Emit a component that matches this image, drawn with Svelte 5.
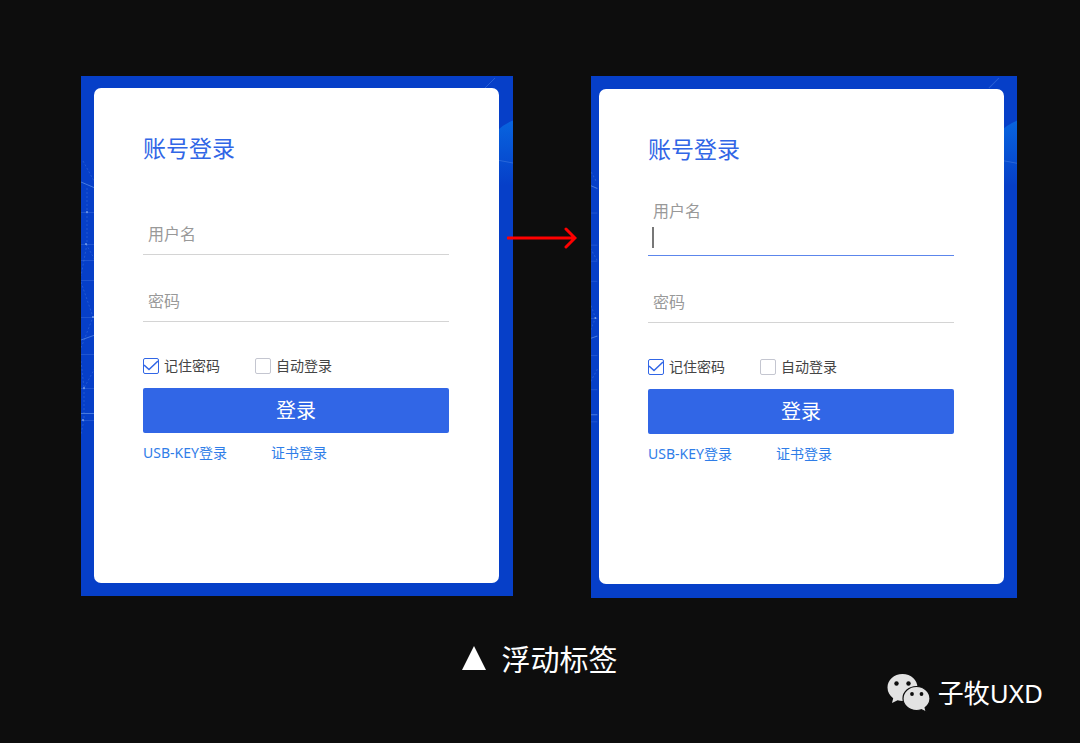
<script lang="ts">
	const panels = [
		{ id: 'rest', focused: false },
		{ id: 'focus', focused: true }
	];

	const gridLines = [136, 168, 184, 204, 241, 278, 312, 344];
	const nodes = [
		[6, 136],
		[5, 168],
		[12, 241],
		[3, 312],
		[2, 344]
	];
</script>

<main class="page">
	<div class="stage">
		{#each panels as panel, i}
			{#if i > 0}
				<div class="arrow">
					<svg width="70" height="22" viewBox="0 0 70 22" fill="none" aria-hidden="true">
						<path d="M1 11h66M59 2l9 9-9 9" stroke="#f00" stroke-width="3" stroke-linecap="round" />
					</svg>
				</div>
			{/if}
			<section class="frame" class:frame-focus={panel.focused}>
				<svg class="scene" viewBox="0 0 432 520" preserveAspectRatio="xMaxYMin slice" aria-hidden="true">
					<defs>
						<linearGradient id="glow-{panel.id}" x1="0" y1="0" x2="0" y2="1">
							<stop offset="0" stop-color="#0866e0" />
							<stop offset="0.7" stop-color="#063fc8" />
						</linearGradient>
					</defs>
					<circle cx="450" cy="90" r="49" fill="url(#glow-{panel.id})" />
					<path d="M404 12l10-10M416 84l16 3" stroke="#4a80e4" stroke-opacity="0.5" />
					{#each gridLines as y}
						<path d="M0 {y}.5h14" stroke="#5a88e8" stroke-opacity="0.3" />
					{/each}
					<path d="M0 106l14 6M0 264l14-5M0 337.5h14" stroke="#6fa0f0" stroke-opacity="0.6" />
					<path
						d="M2 85l11 20M6 112v56L0 200M0 206l12 35L0 272M5 168l9 16M0 285l3 27 11-20M3 312v32l-3 14"
						stroke="#4a80e4"
						stroke-opacity="0.4"
						stroke-dasharray="2 2"
						fill="none"
					/>
					{#each nodes as [x, y]}
						<circle cx={x} cy={y} r="1" fill="#9cbcf5" fill-opacity="0.7" />
					{/each}
				</svg>

				<form class="card" onsubmit={(e) => e.preventDefault()}>
					<h2 class="title">账号登录</h2>

					<div class="field" class:active={panel.focused}>
						<input id="user-{panel.id}" type="text" autocomplete="off" />
						<label for="user-{panel.id}">用户名</label>
						{#if panel.focused}
							<span class="caret"></span>
						{/if}
					</div>
					<div class="field">
						<input id="pass-{panel.id}" type="password" autocomplete="off" />
						<label for="pass-{panel.id}">密码</label>
					</div>

					<div class="options">
						<label class="check"><input type="checkbox" checked />记住密码</label>
						<label class="check"><input type="checkbox" />自动登录</label>
					</div>

					<button class="submit" type="submit">登录</button>

					<div class="links">
						<a href="#usb-key">USB-KEY登录</a>
						<a href="#cert">证书登录</a>
					</div>
				</form>
			</section>
		{/each}
	</div>

	<div class="caption">
		<svg width="24" height="28" viewBox="0 0 24 28" aria-hidden="true">
			<path d="M12 0l12 24H0z" fill="#fff" />
		</svg>
		<span>浮动标签</span>
	</div>

	<footer class="credit">
		<svg width="44" height="38" viewBox="0 0 44 38" aria-hidden="true">
			<path
				d="M15.500 0C7 0 .5 6 .5 13.500c0 4.500 2.200 8.200 5.700 10.700L5 29l5.600-2.700c1.600.5 3.200.7 4.900.7 8.500 0 15-6 15-13.500S24 0 15.500 0z"
				fill="#e2e2e2"
			/>
			<path
				d="M29.500 12.500c-7.500 0-13.500 5.300-13.500 12s6 12 13.500 12c1.700 0 3.300-.3 4.800-.8l5 2.300-1.200-4.300c3-2.200 4.900-5.500 4.900-9.200 0-6.700-6-12-13.500-12z"
				fill="#e2e2e2"
				stroke="#0d0d0d"
				stroke-width="1.200"
			/>
			<g fill="#0d0d0d">
				<circle cx="9.500" cy="9.500" r="2.200" />
				<circle cx="21.500" cy="9.500" r="2.200" />
				<circle cx="25" cy="20" r="1.900" />
				<circle cx="34.500" cy="20" r="1.900" />
			</g>
		</svg>
		<span>子牧UXD</span>
	</footer>
</main>

<style>
	:global(body) {
		margin: 0;
		background: #0d0d0d;
	}

	.page {
		box-sizing: border-box;
		min-height: 100vh;
		padding-top: 76px;
		background: #0d0d0d;
		color: #fff;
		font-family: 'Noto Sans', 'Noto Sans CJK SC', sans-serif;
	}

	.stage {
		display: grid;
		grid-template-columns: minmax(0, 432fr) minmax(0, 78fr) minmax(0, 426fr);
		align-items: start;
		padding: 0 63px 0 81px;
	}

	.frame {
		position: relative;
		display: flex;
		padding: 12px 14px 13px 13px;
		background: #063fc8;
	}

	.frame-focus {
		padding: 13px 13px 14px 8px;
	}

	.scene {
		position: absolute;
		inset: 0;
		width: 100%;
		height: 100%;
	}

	/* the tail of the arrow runs over the edge of the first frame */
	.arrow {
		position: relative;
		z-index: 1;
		display: flex;
		justify-content: flex-end;
		padding: 151px 14px 0 0;
	}

	.arrow svg {
		flex: none;
	}

	.card {
		position: relative;
		box-sizing: border-box;
		flex: 1;
		padding: 44px 50px 120px 49px;
		border-radius: 7px;
		background: #fff;
	}

	.title {
		margin: 0 0 34px;
		color: #3166e6;
		font-size: 23px;
		font-weight: 400;
		line-height: 32px;
	}

	.field {
		position: relative;
		margin-bottom: 10px;
		padding-top: 24px;
		border-bottom: 1px solid #d4d4d4;
	}

	.field input {
		display: block;
		box-sizing: border-box;
		width: 100%;
		height: 32px;
		padding: 0 5px;
		border: 0;
		outline: 0;
		background: transparent;
		color: #333;
		font: inherit;
		font-size: 16px;
	}

	.field label {
		position: absolute;
		left: 5px;
		bottom: 8px;
		color: #999;
		font-size: 16px;
		line-height: 24px;
	}

	.field.active {
		border-bottom-color: #5c86ec;
	}

	.field.active label {
		bottom: 32px;
	}

	.caret {
		position: absolute;
		left: 4px;
		bottom: 7px;
		width: 2px;
		height: 21px;
		background: #777;
	}

	.options {
		display: flex;
		gap: 35px;
		margin-top: 32px;
		color: #444;
		font-size: 14px;
		line-height: 24px;
	}

	.check {
		display: flex;
		align-items: center;
		gap: 5px;
	}

	.check input {
		appearance: none;
		box-sizing: border-box;
		width: 16px;
		height: 16px;
		margin: 0;
		border: 1px solid #c4c6d0;
		border-radius: 2px;
		background: #fff;
	}

	.check input:checked {
		border-color: #3166e6;
		background: #fff
			url("data:image/svg+xml,%3Csvg xmlns='http://www.w3.org/2000/svg' viewBox='0 0 14 14'%3E%3Cpath d='M0 6l5 4.500L14 2' fill='none' stroke='%233166e6' stroke-width='1.500'/%3E%3C/svg%3E")
			center / 14px no-repeat;
	}

	.submit {
		display: block;
		width: 100%;
		height: 45px;
		margin: 10px 0;
		padding: 0 0 2px;
		border: 0;
		border-radius: 2px;
		background: #3166e6;
		color: #fff;
		font: inherit;
		font-size: 20px;
	}

	.links {
		display: flex;
		gap: 44px;
		font-size: 14px;
		line-height: 20px;
	}

	.links a {
		color: #2f7de8;
		text-decoration: none;
	}

	.caption {
		display: flex;
		align-items: center;
		justify-content: center;
		gap: 15px;
		margin-top: 48px;
		font-size: 29px;
		line-height: 28px;
	}

	.credit {
		display: flex;
		align-items: center;
		justify-content: flex-end;
		gap: 7px;
		padding-right: 37px;
		font-size: 26px;
		line-height: 38px;
	}
</style>
